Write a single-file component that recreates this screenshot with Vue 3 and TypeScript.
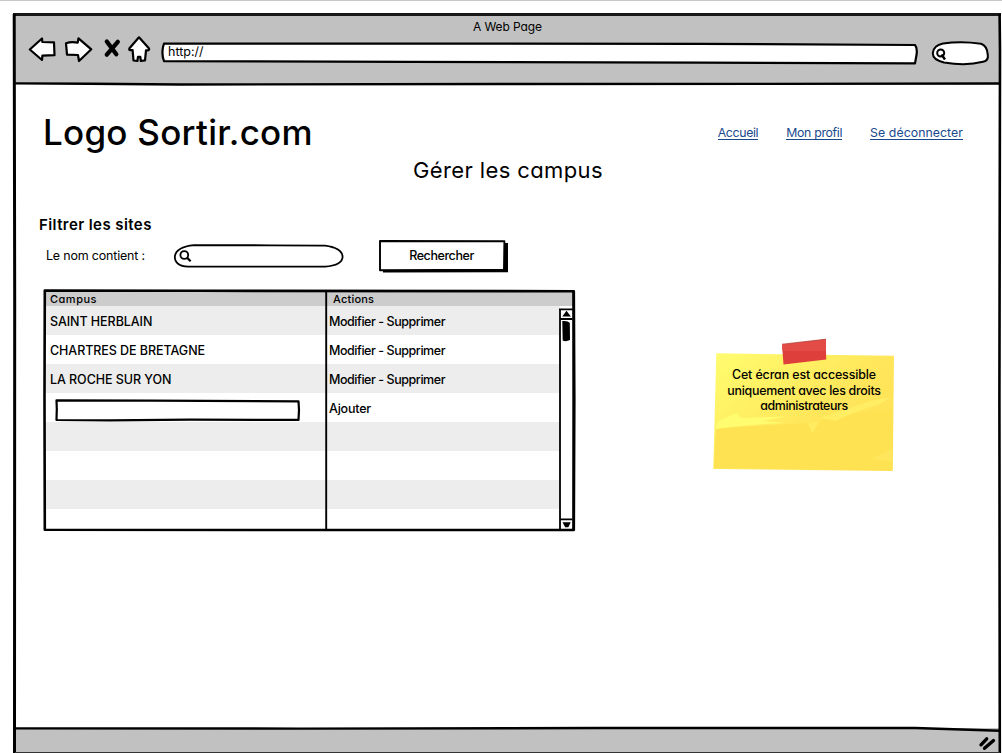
<script setup lang="ts">
interface Row {
  campus?: string
  actions?: string
  editable?: boolean
}

const links = [
  { label: 'Accueil', cls: 'l1' },
  { label: 'Mon profil', cls: 'l2' },
  { label: 'Se déconnecter', cls: 'l3' },
]

const rows: Row[] = [
  { campus: 'SAINT HERBLAIN', actions: 'Modifier - Supprimer' },
  { campus: 'CHARTRES DE BRETAGNE', actions: 'Modifier - Supprimer' },
  { campus: 'LA ROCHE SUR YON', actions: 'Modifier - Supprimer' },
  { editable: true, actions: 'Ajouter' },
  {}, {}, {}, {},
]
</script>

<template>
  <div class="page">
    <div class="browser">
      <header class="toolbar">
        <div class="window-title"><span>A Web Page</span></div>
        <div class="controls">
          <svg class="nav-icons" width="124" height="32" viewBox="28 34 124 32" fill="#fff" stroke="#000" stroke-width="2.2" stroke-linejoin="round" stroke-linecap="round">
            <path d="M29.8 49.5 L42 38.5 L42.3 42 L54 42.3 L54.5 55.2 L42.4 55.6 L42 60 Z" />
            <path d="M66 43.2 Q71 41.6 77.7 42.6 L78.5 38.3 L91.3 49.3 L79 61 L78 55 L67 54.6 Z" />
            <path d="M106.8 41.5 L116.3 54.3 M117.8 41.8 L106.8 54.6" stroke-width="4.3" fill="none" />
            <path d="M139 37.3 L129.5 48.2 Q128.6 50.4 130.5 50.2 L132.6 50.1 L133.5 60.5 L137.4 61 L138 56.8 L140.3 56.8 L140.8 61 L145 60.3 L146 50.3 L148 50.4 Q150 50 148.6 48 Z" />
          </svg>
          <div class="url">
            <svg class="outline" width="758" height="24" viewBox="161 42 758 24" fill="#fff" stroke="#000" stroke-width="2.2" stroke-linejoin="round">
              <path d="M164 43.5 L500 43.7 L700 43.8 L915 45 Q917.6 48 916.5 55 L915 63.4 L700 62.6 L410 61.8 L164 61.2 Q161.5 55 163 47 Z" />
            </svg>
            <span>http://</span>
          </div>
          <svg class="web-search" width="60" height="26" viewBox="930 40 60 26" fill="#fff" stroke="#000" stroke-width="2">
            <path d="M943 43.5 Q961 40.8 981 43.7 Q987 45.7 987.6 54 Q989 60.5 983 61.8 Q966 66.2 944 62.5 Q932.5 60 932.8 53 Q933.5 45.5 943 43.5 Z" />
            <circle cx="940.7" cy="53" r="3.5" /><path d="M941.5 54.5 L945 59.5" stroke-width="2.4" />
          </svg>
        </div>
      </header>

      <main class="content">
        <div class="masthead">
          <h1>Logo Sortir.com</h1>
          <nav>
            <a v-for="l in links" :key="l.label" :class="l.cls">{{ l.label }}</a>
          </nav>
        </div>
        <h2>Gérer les campus</h2>
        <h3>Filtrer les sites</h3>
        <div class="filter">
          <label>Le nom contient :</label>
          <svg class="field" width="172" height="26" viewBox="173 243 172 26" fill="#fff" stroke="#000" stroke-width="1.8">
            <path d="M194 245.1 L270 245.3 L325 245.6 Q342.6 248 342.6 257 Q342 265.5 325 266.6 L188 266.7 Q175 266 174.8 257 Q175.5 247 194 245.1 Z" />
            <circle cx="184.3" cy="255" r="3.9" /><path d="M187 257.6 L190.6 261.2" stroke-width="2.2" />
          </svg>
          <button type="button">
            <svg class="outline" width="131" height="34" viewBox="378 239 131 34">
              <path d="M383 243 H508 V272.3 L383 272.5 Z" />
              <path d="M380 241 L504.4 241.2 L504 269.6 L380 270.2 Z" fill="#fff" stroke="#000" stroke-width="1.9" stroke-linejoin="round" />
            </svg>
            <span>Rechercher</span>
          </button>
        </div>

        <div class="lower">
          <div class="table">
            <div class="row head">
              <div class="cell h-campus">Campus</div>
              <div class="cell act">Actions</div>
            </div>
            <div v-for="(r, i) in rows" :key="i" class="row" :class="{ odd: i % 2 === 0 }">
              <div class="cell">
                <svg v-if="r.editable" class="entry" width="248" height="25" viewBox="53 398 248 25" fill="#fff" stroke="#000" stroke-width="2.2" stroke-linejoin="round">
                  <path d="M56.5 400.4 L150 400.7 L298.5 401.3 L299 410 L298.5 419.9 L190 419.7 L110 420.3 L56.5 420 L56.8 409 Z" />
                </svg>
                <span v-else>{{ r.campus }}</span>
              </div>
              <div class="cell act" :class="{ add: r.editable }">{{ r.actions }}</div>
            </div>
            <svg class="outline" width="536" height="244" viewBox="42 288 536 244" fill="none" stroke="#000" stroke-width="2.2">
              <path d="M559.7 308 H572.5 V529 H559.7 Z" fill="#fff" stroke="none" />
              <path d="M560 309 V529 M559 309.3 H573 M560 319 H572.5 M560 519.3 H572.5" stroke-width="1.8" />
              <path d="M562.3 316.6 L566.5 310.8 L570.9 316.6 Z M562.5 522.2 H570.8 L568.3 527.2 H565.2 Z" fill="#000" stroke="none" />
              <path d="M562.3 321 Q568 320.5 569.8 323 L570 340 Q566 342 562.7 340.5 Z" fill="#000" stroke="none" />
              <path d="M44.8 290.5 L200 290.8 L573.8 291.2 L574.3 400 L573.8 530 L300 530 L44.8 529.8 L44.5 400 Z" stroke-width="2.6" stroke-linejoin="round" />
              <path d="M573 292 V529" stroke-width="1.4" />
              <path d="M326.2 292 V529" stroke-width="1.9" />
            </svg>
          </div>

          <aside class="note">
            <svg class="outline" width="182" height="134" viewBox="712 338 182 134">
              <defs>
                <linearGradient id="paper" x1="0" y1="0" x2="1" y2=".8">
                  <stop offset="0" stop-color="#fffd70" /><stop offset=".2" stop-color="#fff568" /><stop offset=".6" stop-color="#ffe65a" /><stop offset="1" stop-color="#ffe055" />
                </linearGradient>
              </defs>
              <path d="M716.3 353.3 L894 355.8 L892.8 471 L713.3 469 Z" fill="url(#paper)" />
              <path d="M716 428.5 Q765 425 810 423 Q850 412 893 410 L892 470 L714 468 Z" fill="#ffe251" />
              <path d="M718 421 L737 413 L741 418 L786 416.5 L763 421 L785 423 Q750 424 715.5 429 Z" fill="#fffc70" />
              <path d="M820 418 L870 401 L892 397 L878 405 Q850 413 836 421 Z" fill="#ffed63" />
              <path d="M808 423.5 L820 421 L812 433 Z" fill="#ffec62" />
              <path d="M871 459 L892 449 L892.5 462 Z" fill="#ffe65c" />
              <path d="M782 344.5 L825.8 339.2 L826.2 359.5 L783.5 364.5 Z" fill="#df3f3b" />
              <path d="M782 344.5 L825.8 339.2 L826 351 L782.5 351 Z" fill="#e34c46" />
              <path d="M782 344.2 L826 339.2" stroke="#b5453f" stroke-width=".8" />
            </svg>
            <p><span class="p1">Cet écran est accessible</span> <span class="p2">uniquement avec les droits</span> <span class="p3">administrateurs</span></p>
          </aside>
        </div>
      </main>

      <footer>
        <svg width="18" height="15" viewBox="979 736 18 15" stroke="#000" stroke-width="3.4" stroke-linecap="round">
          <path d="M982 744.8 L987.7 738.8 M985.5 748.3 L994.5 740.5" />
        </svg>
      </footer>

      <svg class="frame" width="1002" height="753" viewBox="0 0 1002 753" fill="none" stroke="#000" stroke-width="2.4">
        <path d="M13 14.5 L1001 14.5" stroke="#181818" stroke-width="3" />
        <path d="M14.2 14 L14.7 300 L14.5 753" stroke-width="3" />
        <path d="M999.6 14 L1000 50 L999.4 400 L999.8 753" stroke-width="2.6" />
        <path d="M15 83.4 L90 83.8 L180 84.5 L500 84 L770 83.9 L1000 83.5" />
        <path d="M15 728.4 L300 728.6 L600 728 L915 728 L1000 730.8" />
        <path d="M15 752.8 H1000" stroke-width="1.4" stroke="#333" />
      </svg>
    </div>
  </div>
</template>

<style>
html, body { margin: 0; background: #fff; overflow: hidden; }
</style>

<style scoped>
* { box-sizing: border-box; }
.page {
  width: 1002px; height: 753px; padding: 12px 0 0 13px;
  border-top: 1px solid #c8c8c8; position: relative; overflow: hidden;
  font: 500 12.5px/16px Inter, "Noto Sans", sans-serif;
  font-feature-settings: "cv11";
  color: #000; white-space: nowrap;
}
.browser { display: flex; flex-direction: column; width: 987px; height: 740px; }
.frame { position: absolute; left: 0; top: -1px; }
.outline { position: absolute; left: 0; top: 0; }
.toolbar { height: 71px; background: #c1c1c1; font-weight: 400; }
.window-title { padding: 6px 0 0 460px; font-size: 12px; line-height: 16px; letter-spacing: -.1px; }
.controls { display: flex; align-items: flex-start; }
.nav-icons { margin: -1px 9px 0 15px; }
.url { position: relative; width: 758px; height: 24px; margin: 7px 11px 0 0; padding: 2px 0 0 7px; }
.url span { position: relative; }
.web-search { margin-top: 5px; }
.content { flex: none; height: 644px; padding-top: 28px; }
.masthead { display: flex; justify-content: space-between; padding: 0 37px 0 30px; }
h1, h2, h3, p { margin: 0; font-weight: 500; }
h1 { font-size: 35px; line-height: 41px; height: 40px; letter-spacing: .25px; }
nav { display: flex; gap: 28px; padding-top: 13px; font-size: 12.3px; font-weight: 400; }
nav a { color: #17498c; border-bottom: 1px solid #17498c; height: 15px; line-height: 15px; }
.l1 { letter-spacing: -.34px; }
.l2 { letter-spacing: -.32px; }
.l3 { letter-spacing: .06px; }
h2 { font-size: 22px; line-height: 28px; padding: 4px 0 1px 400px; font-weight: 400; letter-spacing: .38px; }
h3 { font-size: 15px; line-height: 20px; font-weight: 600; margin-top: 30px; padding-left: 26px; letter-spacing: .42px; }
.filter { display: flex; margin-top: 3px; height: 36px; }
label { width: 127px; margin-left: 33px; padding-top: 10px; font-weight: 400; letter-spacing: -.2px; }
.field { margin-top: 5px; }
button {
  position: relative; width: 131px; height: 34px; margin: 1px 0 0 33px; padding: 0 4px 1px 0;
  border: 0; background: none; font: inherit; font-feature-settings: inherit; color: inherit; letter-spacing: -.42px;
}
button span { position: relative; }
.lower { display: flex; align-items: flex-start; margin-top: 16px; }
.table { position: relative; flex: none; width: 532px; height: 241px; margin-left: 30px; padding: 1px 0 0 2px; }
.table .outline { left: -1px; top: -2px; }
.row { display: flex; height: 29px; width: 515px; }
.row:last-of-type { height: 20px; }
.row.odd { background: #ededed; }
.row.head { height: 15px; width: 528px; background: #ccc; font-size: 11px; line-height: 16px; }
.cell { flex: none; width: 281px; padding: 8px 0 0 5px; letter-spacing: -.06px; }
.cell.act { width: 234px; padding-left: 3px; letter-spacing: -.44px; }
.cell.add { letter-spacing: -.2px; }
.head .cell { padding-top: 0; }
.head .h-campus { letter-spacing: .5px; }
.head .act { padding-left: 7px; letter-spacing: .2px; }
.entry { display: block; margin: -3px 0 0 3px; }
.note { position: relative; width: 182px; height: 134px; margin: 48px 0 0 137px; }
.note p { position: relative; display: flex; flex-direction: column; align-items: center; padding: 29px 0 0 2px; line-height: 15.6px; font-size: 12.4px; }
.p1 { letter-spacing: -.1px; }
.p2 { letter-spacing: -.25px; }
.p3 { letter-spacing: -.4px; }
footer { flex: 1; background: #c1c1c1; display: flex; justify-content: flex-end; padding: 8px 4px 0 0; }
</style>
